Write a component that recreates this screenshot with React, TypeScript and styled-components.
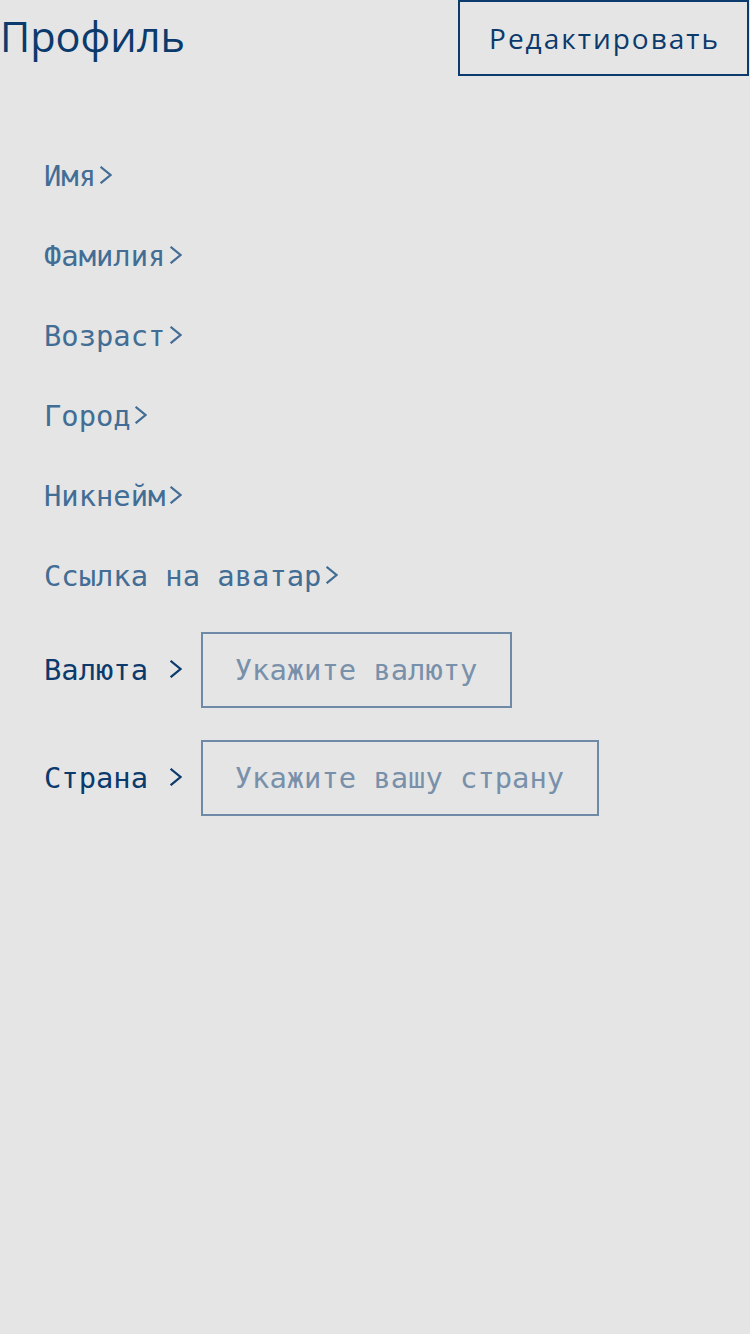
import React from "react";
import styled, { createGlobalStyle } from "styled-components";

const Global = createGlobalStyle`
  html, body { margin: 0; padding: 0; background: #e5e5e5; }
  body { min-height: 1334px; }
  * { box-sizing: border-box; }
`;

const Page = styled.div`
  width: 750px;
  min-height: 1334px;
  background: #e5e5e5;
`;

const Header = styled.header`
  display: flex;
  justify-content: space-between;
  align-items: flex-start;
  height: 76px;
  padding-right: 1px;
`;

const Title = styled.h1`
  margin: 0;
  padding-top: 8px;
  font-family: "Open Sans", sans-serif;
  font-weight: 400;
  font-size: 41.5px;
  line-height: 56px;
  color: #0b3a6c;
`;

const EditButton = styled.button`
  height: 76px;
  padding: 0 27px 0 29px;
  border: 2px solid #0b3a6c;
  background: transparent;
  font-family: "Open Sans", sans-serif;
  font-size: 28px;
  letter-spacing: 2px;
  color: #0b3a6c;
  cursor: pointer;
`;

const List = styled.div`
  display: flex;
  flex-direction: column;
  padding-left: 44px;
  margin-top: 60px;
`;

const Item = styled.div`
  height: 80px;
  line-height: 80px;
  font-family: "DejaVu Sans Mono", monospace;
  font-size: 28.8px;
  color: #426d95;
  white-space: pre;
`;

const ChevronCell = styled.span`
  display: inline-block;
  width: 0.602em;
  height: 18px;
  line-height: 0;
  text-align: center;
  vertical-align: 2px;
  svg {
    display: inline-block;
    width: 12px;
    height: 18px;
    margin-left: 3px;
  }
`;

const Chevron = () => (
  <ChevronCell>
    <svg viewBox="0 0 12 18" fill="none" stroke="currentColor" strokeWidth="2.2" strokeLinecap="square">
      <path d="M1.5 1.5 L10.5 9 L1.5 16.5" />
    </svg>
  </ChevronCell>
);

const Fields = styled.div`
  display: flex;
  flex-direction: column;
  gap: 32px;
  margin-top: 16px;
`;

const Field = styled.label`
  display: flex;
  align-items: center;
  height: 76px;
  font-family: "DejaVu Sans Mono", monospace;
  font-size: 28.8px;
  color: #0b3a6c;
`;

const FieldLabel = styled.span`
  white-space: pre;
  margin-right: 18px;
`;

const Input = styled.input<{ $chars: number }>`
  width: calc(${(p) => p.$chars * 0.602}em + 69px);
  height: 76px;
  padding: 0 0 0 32px;
  border: 2px solid #6f8aa7;
  background: transparent;
  font-family: "DejaVu Sans Mono", monospace;
  font-size: 28.8px;
  color: #0b3a6c;
  outline: none;
  &::placeholder {
    color: #7890aa;
  }
`;

const items = ["Имя", "Фамилия", "Возраст", "Город", "Никнейм", "Ссылка на аватар"];

export default function App() {
  return (
    <Page>
      <Global />
      <Header>
        <Title>Профиль</Title>
        <EditButton>Редактировать</EditButton>
      </Header>
      <List>
        {items.map((t) => (
          <Item key={t}>
            {t}
            <Chevron />
          </Item>
        ))}
        <Fields>
          <Field>
            <FieldLabel>
              Валюта <Chevron />
            </FieldLabel>
            <Input $chars={14} placeholder="Укажите валюту" />
          </Field>
          <Field>
            <FieldLabel>
              Страна <Chevron />
            </FieldLabel>
            <Input $chars={19} placeholder="Укажите вашу страну" />
          </Field>
        </Fields>
      </List>
    </Page>
  );
}
